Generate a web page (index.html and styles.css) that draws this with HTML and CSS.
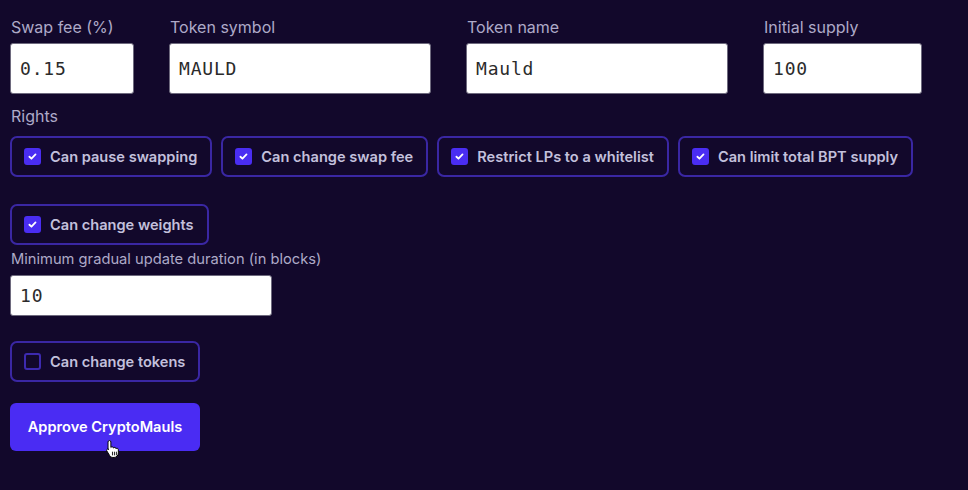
FILE: index.html
```html
<!DOCTYPE html>
<html>
<head>
<meta charset="utf-8">
<link rel="stylesheet" href="styles.css">
</head>
<body>
<div class="page">
  <div class="fields">
    <div class="field w-fee">
      <label class="lbl">Swap fee (%)</label>
      <input class="inp big" value="0.15">
    </div>
    <div class="field w-sym">
      <label class="lbl">Token symbol</label>
      <input class="inp big" value="MAULD">
    </div>
    <div class="field w-name">
      <label class="lbl">Token name</label>
      <input class="inp big" value="Mauld">
    </div>
    <div class="field w-sup">
      <label class="lbl">Initial supply</label>
      <input class="inp big" value="100">
    </div>
  </div>

  <div class="lbl rights-lbl">Rights</div>
  <div class="pills">
    <div class="pill"><span class="cb on"><svg viewBox="0 0 16 16"><path d="M4.2 8.3l2.5 2.4 5-5.2" fill="none" stroke="#fff" stroke-width="2.2" stroke-linecap="round" stroke-linejoin="round"/></svg></span>Can pause swapping</div>
    <div class="pill"><span class="cb on"><svg viewBox="0 0 16 16"><path d="M4.2 8.3l2.5 2.4 5-5.2" fill="none" stroke="#fff" stroke-width="2.2" stroke-linecap="round" stroke-linejoin="round"/></svg></span>Can change swap fee</div>
    <div class="pill"><span class="cb on"><svg viewBox="0 0 16 16"><path d="M4.2 8.3l2.5 2.4 5-5.2" fill="none" stroke="#fff" stroke-width="2.2" stroke-linecap="round" stroke-linejoin="round"/></svg></span>Restrict LPs to a whitelist</div>
    <div class="pill"><span class="cb on"><svg viewBox="0 0 16 16"><path d="M4.2 8.3l2.5 2.4 5-5.2" fill="none" stroke="#fff" stroke-width="2.2" stroke-linecap="round" stroke-linejoin="round"/></svg></span>Can limit total BPT supply</div>
    <div class="pill"><span class="cb on"><svg viewBox="0 0 16 16"><path d="M4.2 8.3l2.5 2.4 5-5.2" fill="none" stroke="#fff" stroke-width="2.2" stroke-linecap="round" stroke-linejoin="round"/></svg></span>Can change weights</div>
  </div>

  <div class="field w-dur">
    <label class="lbl lbl-sm">Minimum gradual update duration (in blocks)</label>
    <input class="inp small" value="10">
  </div>

  <div class="pill tokens"><span class="cb"></span>Can change tokens</div>

  <div class="btn-wrap">
    <button class="btn">Approve CryptoMauls</button>
    <svg class="cursor" viewBox="0 0 18 22" width="16" height="20">
      <path d="M5 1.5c1 0 1.6.7 1.6 1.6v6.2c.3-.6 1-.9 1.6-.8.8.1 1.3.7 1.3 1.4.3-.5.9-.8 1.6-.7.8.1 1.3.8 1.3 1.5.3-.4.9-.6 1.4-.5.8.2 1.2.9 1.2 1.6v3.6c0 2.8-2 5.1-4.8 5.1H8.9c-1.6 0-2.8-.7-3.6-2L2 13.1c-.4-.7-.2-1.5.5-1.9.6-.3 1.3-.2 1.8.4l-.9-.6V3.1C3.4 2.2 4 1.5 5 1.5z" fill="#fff" stroke="#000" stroke-width="1.1" stroke-linejoin="round"/>
      <path d="M8.4 14.5v3.2M10.6 14.5v3.2M12.8 14.5v3.2" stroke="#000" stroke-width="1" stroke-linecap="round"/>
    </svg>
  </div>
</div>
</body>
</html>
```

FILE: styles.css
```css
html, body {
  margin: 0;
  padding: 0;
  background: #12082b;
}
body {
  width: 968px;
  height: 490px;
  overflow: hidden;
  font-family: "Inter", "Liberation Sans", sans-serif;
}
.page {
  padding: 17px 10px 0 10px;
  display: flex;
  flex-direction: column;
  align-items: flex-start;
}
.fields {
  display: flex;
  gap: 35px;
}
.field {
  display: flex;
  flex-direction: column;
}
.w-fee { width: 124px; }
.w-sym { width: 262px; }
.w-name { width: 262px; }
.w-sup { width: 159px; }
.w-dur { width: 262px; margin-top: 4px; }
.lbl {
  display: block;
  font-size: 16px;
  line-height: 20px;
  color: #aeaac8;
  white-space: nowrap;
  margin-left: 1px;
}
.lbl-sm {
  font-size: 14.7px;
}
.inp {
  box-sizing: border-box;
  width: 100%;
  margin-top: 6px;
  background: #fff;
  border: 1px solid #6e6a7e;
  border-radius: 3px;
  padding: 0 0 0 9px;
  font-family: "DejaVu Sans Mono", "Liberation Mono", monospace;
  font-size: 18px;
  letter-spacing: 0.8px;
  color: #2b2b2b;
  outline: none;
}
.inp.big { height: 51px; }
.inp.small { height: 41px; }
.rights-lbl {
  margin-top: 12px;
}
.pills {
  margin-top: 10px;
  display: flex;
  flex-wrap: wrap;
  column-gap: 9px;
  row-gap: 27px;
  width: 948px;
}
.pill {
  box-sizing: border-box;
  height: 41px;
  display: flex;
  align-items: center;
  gap: 9px;
  padding: 0 13px 0 12px;
  border: 2px solid #3a27a3;
  border-radius: 7px;
  font-size: 14.6px;
  font-weight: 600;
  color: #c3c0dc;
  white-space: nowrap;
}
.cb {
  box-sizing: border-box;
  width: 17px;
  height: 17px;
  border-radius: 3px;
  border: 2px solid #3d2ab0;
  display: flex;
  align-items: center;
  justify-content: center;
  flex: none;
}
.cb.on {
  background: #4a2df2;
  border-color: #4a2df2;
}
.cb svg {
  width: 15px;
  height: 15px;
}
.tokens {
  margin-top: 25px;
}
.btn-wrap {
  position: relative;
  margin-top: 21px;
}
.btn {
  width: 190px;
  height: 48px;
  border: none;
  border-radius: 6px;
  background: #4a2cf3;
  color: #fff;
  font-family: "Inter", "Liberation Sans", sans-serif;
  font-size: 14.6px;
  font-weight: 600;
  padding: 0;
}
.cursor {
  position: absolute;
  left: 95px;
  top: 36px;
}
```
